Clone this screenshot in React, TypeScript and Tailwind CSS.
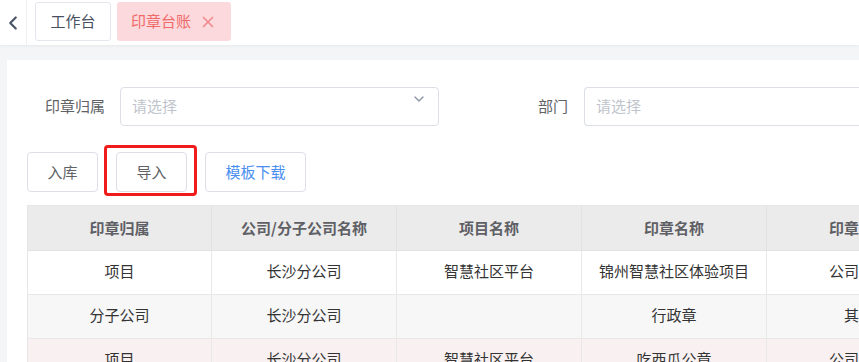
import { ChevronLeft, ChevronDown, X } from "lucide-react"

const COLUMNS = ["印章归属", "公司/分子公司名称", "项目名称", "印章名称", "印章类型"]

const ROWS = [
    { cells: ["项目", "长沙分公司", "智慧社区平台", "锦州智慧社区体验项目", "公司公章"], bg: "bg-white" },
    { cells: ["分子公司", "长沙分公司", "", "行政章", "其他"], bg: "bg-[#f7f7f7]" },
    { cells: ["项目", "长沙分公司", "智慧社区平台", "吃西瓜公章", "公司公章"], bg: "bg-[#f9f1f1]" },
]

export default function App() {
    return (
        <div
            className="w-[859px] h-[362px] overflow-hidden bg-[#f4f5f7] text-[15px] text-[#303133]"
            style={{ fontFamily: '"Noto Sans CJK SC", "Noto Sans", sans-serif' }}
        >
            {/* Top tab bar */}
            <div className="h-[45px] bg-white flex shadow-[0_1px_3px_rgba(0,0,0,0.06)]">
                <div className="w-[27px] flex items-center justify-center border-r border-[#f0f0f0]">
                    <ChevronLeft size={22} strokeWidth={2.4} className="text-[#4a5568]" />
                </div>
                <div className="flex gap-[6px] pl-[8px] pt-[2px]">
                    <div className="w-[76px] h-[39px] flex items-center justify-center rounded-[3px] border border-[#e4e7ed] text-[#495060]">
                        工作台
                    </div>
                    <div className="w-[114px] h-[39px] flex items-center justify-center gap-[8px] rounded-[3px] bg-[#fbd9dc] text-[#f06a6a]">
                        <span>印章台账</span>
                        <X size={18} strokeWidth={2.2} className="text-[#f08a8f]" />
                    </div>
                </div>
            </div>

            {/* Main card */}
            <div className="mt-[15px] ml-[7px] bg-white h-[400px] pt-[27px]">
                <div className="flex items-center">
                    <div className="w-[98px] text-right text-[#606266]">印章归属</div>
                    <div className="ml-[15px] w-[319px] h-[39px] rounded-[4px] border border-[#dcdfe6] relative flex items-center pl-[11px] text-[#c0c4cc]">
                        请选择
                        <ChevronDown size={16} strokeWidth={2} className="absolute right-[11px] top-[3px] text-[#8a94a6]" />
                    </div>
                    <div className="w-[129px] text-right text-[#606266]">部门</div>
                    <div className="ml-[16px] flex-1 h-[39px] rounded-l-[4px] border border-r-0 border-[#dcdfe6] flex items-center pl-[11px] text-[#c0c4cc]">
                        请选择
                    </div>
                </div>

                <div className="flex gap-[18px] mt-[26px] pl-[20px]">
                    <button className="w-[71px] h-[40px] rounded-[4px] border border-[#dcdfe6] text-[#606266]">入库</button>
                    <div className="relative">
                        <button className="w-[71px] h-[40px] rounded-[4px] border border-[#dcdfe6] text-[#606266]">导入</button>
                        <div className="absolute left-[-12px] top-[-7px] w-[93px] h-[51px] rounded-[4px] border-[3px] border-[#f01c1c]" />
                    </div>
                    <button className="w-[101px] h-[40px] rounded-[4px] border border-[#dcdfe6] text-[#4a8ff0]">模板下载</button>
                </div>

                <div className="mt-[13px] ml-[20px] border-t border-l border-[#e6e6e6]">
                    <div className="flex bg-[#ebebeb]">
                        {COLUMNS.map((col, j) => (
                            <div
                                key={col}
                                className={`${j === 0 ? "w-[184px]" : "w-[185px]"} shrink-0 h-[45px] flex items-center justify-center border-r border-b border-[#e2e2e2] font-bold text-[#5f5f66]`}
                            >
                                {col}
                            </div>
                        ))}
                    </div>
                    {ROWS.map((row, i) => (
                        <div key={i} className={`flex ${row.bg}`}>
                            {row.cells.map((cell, j) => (
                                <div
                                    key={j}
                                    className={`${j === 0 ? "w-[184px]" : "w-[185px]"} shrink-0 h-[44px] flex items-center justify-center pb-[3px] border-r border-b border-[#e8e8e8] text-[#333]`}
                                >
                                    {cell}
                                </div>
                            ))}
                        </div>
                    ))}
                </div>
            </div>
        </div>
    )
}
